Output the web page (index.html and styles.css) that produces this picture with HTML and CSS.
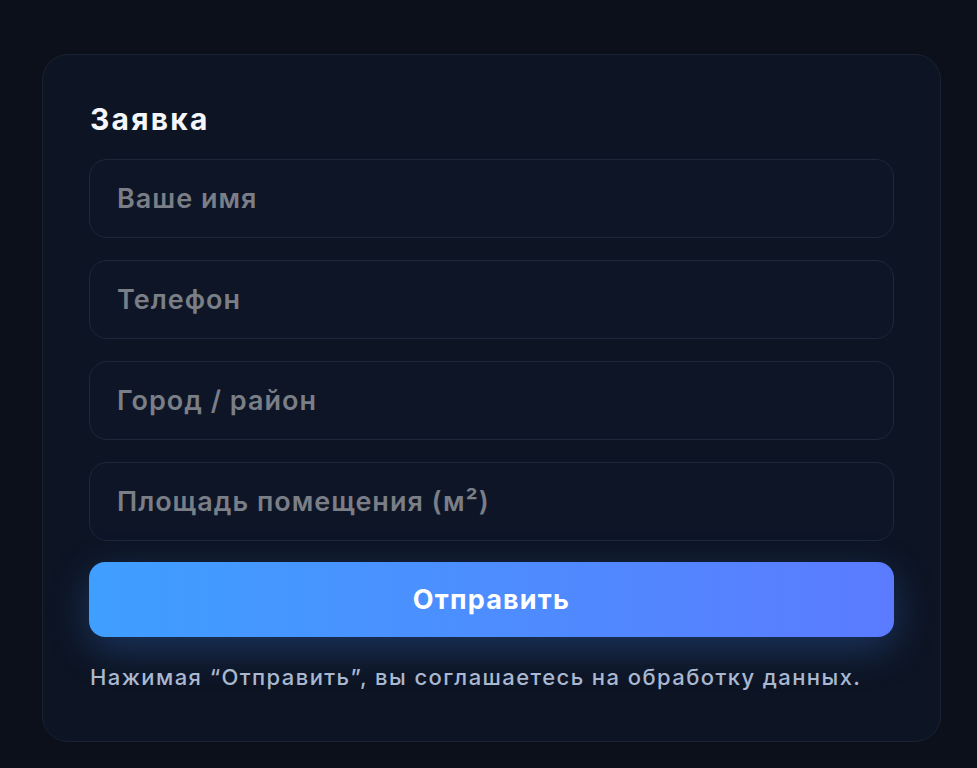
FILE: index.html
```html
<!DOCTYPE html>
<html lang="ru">
<head>
<meta charset="utf-8">
<link rel="stylesheet" href="styles.css">
</head>
<body>
<div class="page">
  <form class="card">
    <h2 class="title">Заявка</h2>
    <div class="fields">
      <input class="field" type="text" placeholder="Ваше имя">
      <input class="field" type="text" placeholder="Телефон">
      <input class="field" type="text" placeholder="Город / район">
      <input class="field" type="text" placeholder="Площадь помещения (м²)">
      <button class="submit" type="button">Отправить</button>
    </div>
    <p class="note">Нажимая “Отправить”, вы соглашаетесь на обработку данных.</p>
  </form>
</div>
</body>
</html>
```
FILE: styles.css
```css
html, body {
  margin: 0;
  padding: 0;
  background: #0b101b;
  height: 100%;
}
body {
  font-family: Inter, "Noto Sans", sans-serif;
  overflow: hidden;
}
.page {
  padding: 54px 0 0 42px;
}
.card {
  box-sizing: border-box;
  width: 899px;
  height: 688px;
  border: 1px solid #1a2233;
  border-radius: 26px;
  background: #0d1423;
  padding: 44px 46px 0 46px;
  display: flex;
  flex-direction: column;
}
.title {
  margin: 0 0 20px 1px;
  font-size: 30px;
  line-height: 40px;
  font-weight: 700;
  letter-spacing: 2.2px;
  color: #f4f6fb;
}
.fields {
  display: flex;
  flex-direction: column;
  gap: 22px;
}
.field {
  box-sizing: border-box;
  width: 100%;
  height: 79px;
  border: 1px solid #1e283b;
  border-radius: 18px;
  background: #0d1527;
  padding: 0 27px;
  font-family: Inter, "Noto Sans", sans-serif;
  font-size: 27px;
  font-weight: 600;
  letter-spacing: 1px;
  color: #e6e9ef;
  outline: none;
}
.field::placeholder {
  color: #7a7e86;
}
.submit {
  height: 75px;
  margin-top: -1px;
  border: none;
  border-radius: 16px;
  background: linear-gradient(90deg, #3f9fff 0%, #4d8dff 50%, #5b7bff 100%);
  color: #ffffff;
  font-family: Inter, "Noto Sans", sans-serif;
  font-size: 27px;
  font-weight: 700;
  letter-spacing: 1.2px;
  box-shadow: 0 12px 40px rgba(64, 140, 255, 0.28);
}
.note {
  margin: 26px 0 0 1px;
  font-size: 22px;
  line-height: 28px;
  font-weight: 500;
  letter-spacing: 1.42px;
  color: #a9b8d0;
  white-space: nowrap;
}
```
